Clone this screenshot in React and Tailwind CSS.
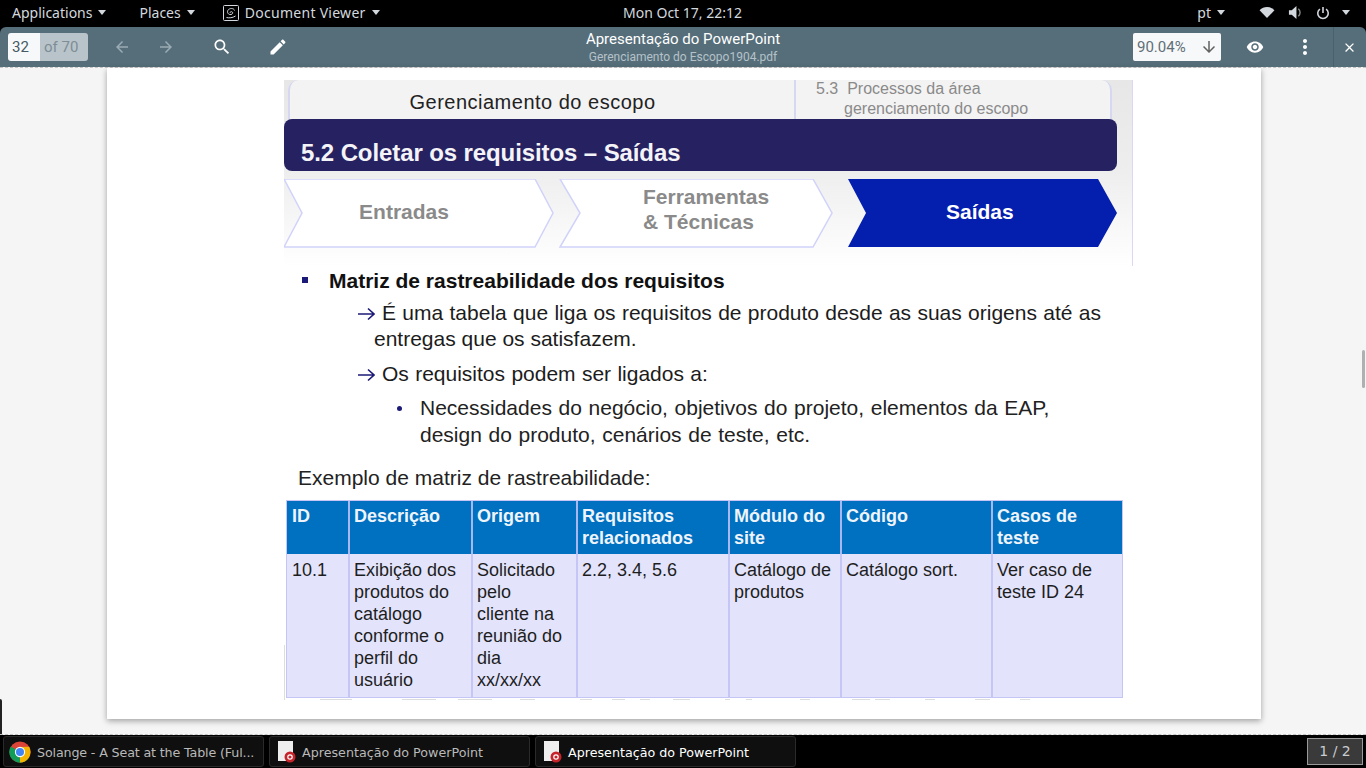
import React from "react";

const paths = {
  back: "M20 11H7.83l5.59-5.59L12 4l-8 8 8 8 1.41-1.41L7.83 13H20v-2z",
  forward: "M12 4l-1.41 1.41L16.17 11H4v2h12.17l-5.58 5.59L12 20l8-8z",
  down: "M20 12l-1.41-1.41L13 16.17V4h-2v12.17l-5.58-5.59L4 12l8 8 8-8z",
  search: "M15.5 14h-.79l-.28-.27C15.41 12.59 16 11.11 16 9.5 16 5.91 13.09 3 9.5 3S3 5.91 3 9.5 5.91 16 9.5 16c1.61 0 3.09-.59 4.23-1.57l.27.28v.79l5 4.99L20.49 19l-4.99-5zm-6 0C7.01 14 5 11.99 5 9.5S7.01 5 9.5 5 14 7.01 14 9.5 11.99 14 9.5 14z",
  edit: "M3 17.25V21h3.75L17.81 9.94l-3.75-3.75L3 17.25zM20.71 7.04c.39-.39.39-1.02 0-1.41l-2.34-2.34c-.39-.39-1.02-.39-1.41 0l-1.83 1.83 3.75 3.75 1.83-1.83z",
  eye: "M12 4.5C7 4.5 2.73 7.61 1 12c1.73 4.39 6 7.5 11 7.5s9.27-3.11 11-7.5c-1.73-4.39-6-7.5-11-7.5zM12 17c-2.76 0-5-2.24-5-5s2.24-5 5-5 5 2.24 5 5-2.24 5-5 5zm0-8c-1.66 0-3 1.34-3 3s1.34 3 3 3 3-1.34 3-3-1.34-3-3-3z",
  more: "M12 8c1.1 0 2-.9 2-2s-.9-2-2-2-2 .9-2 2 .9 2 2 2zm0 2c-1.1 0-2 .9-2 2s.9 2 2 2 2-.9 2-2-.9-2-2-2zm0 6c-1.1 0-2 .9-2 2s.9 2 2 2 2-.9 2-2-.9-2-2-2z",
  close: "M19 6.41L17.59 5 12 10.59 6.41 5 5 6.41 10.59 12 5 17.59 6.41 19 12 13.41 17.59 19 19 17.59 13.41 12z",
};

function MatIcon({ name, className }) {
  return (
    <svg viewBox="0 0 24 24" fill="currentColor" className={className}>
      <path d={paths[name]} />
    </svg>
  );
}

function Caret({ className = "" }) {
  return <span className={"inline-block w-0 h-0 border-x-[4.5px] border-x-transparent border-t-[5px] border-t-[#d3d8de] " + className} />;
}

function ChromeIcon() {
  return (
    <svg viewBox="0 0 24 24" className="w-[22px] h-[22px] shrink-0">
      <circle cx="12" cy="12" r="11.5" fill="#db4437" />
      <path d="M12 12 L22 17.8 A11.5 11.5 0 0 1 6 21.9 Z" fill="#0f9d58" />
      <path d="M12 12 L2 6 A11.5 11.5 0 0 0 6 21.9 L12 12Z" fill="#0f9d58" />
      <path d="M12 12 L12 23.5 A11.5 11.5 0 0 0 22 6.3 L12 6.5Z" fill="#f4b400" />
      <circle cx="12" cy="12" r="5.6" fill="#fff" />
      <circle cx="12" cy="12" r="4.4" fill="#4285f4" />
    </svg>
  );
}

function PdfIcon() {
  return (
    <svg viewBox="0 0 18 24" className="w-[18px] h-[24px] shrink-0">
      <rect x="0" y="1" width="15" height="20" fill="#eeeeee" />
      <circle cx="12" cy="17" r="5.5" fill="#c5242a" />
      <circle cx="12" cy="17" r="2.2" fill="none" stroke="#fff" strokeWidth="1.2" />
    </svg>
  );
}

function ViewerIcon() {
  return (
    <svg viewBox="0 0 16 16" className="w-[16px] h-[16px] ml-[28px]" fill="none" stroke="#d3d8de" strokeWidth="1">
      <rect x="0.5" y="0.5" width="15" height="15" rx="1" />
      <path d="M11.500 5.500C11 3 6.500 2.800 5 5.200c-1.300 2.200.3 4.800 3 4.300 1.600-.3 2.200-1.700 1.300-2.500-.8-.7-2.300-.3-2.300.9M3.500 12.500c2.500.6 6 .5 9-1.500" />
    </svg>
  );
}

function TaskButton({ icon, label, active, pad, labelClass = "" }) {
  return (
    <div className={"w-[261px] h-[31px] flex items-center gap-[6px] rounded-[3px] border border-[#2a2a2a] bg-[#0f0f0f] shrink-0 " + pad + " " + (active ? "text-white" : "text-[#b9b9b9]")}>
      {icon}
      <span className={"text-[12.7px] pt-[2px] whitespace-nowrap " + labelClass}>{label}</span>
    </div>
  );
}

function ArrowGlyph() {
  return (
    <svg viewBox="0 0 17 14" className="inline-block w-[17px] h-[14px] -ml-[24px] mr-[7px] align-[-1px] text-[#1c1a78]" fill="none" stroke="currentColor" strokeWidth="1.6">
      <path d="M0 7h15.5M10 1.5 16 7l-6 5.5" />
    </svg>
  );
}

const head = ["ID", "Descrição", "Origem", "Requisitos relacionados", "Módulo do site", "Código", "Casos de teste"];
const body = [
  "10.1",
  "Exibição dos produtos do catálogo conforme o perfil do usuário",
  "Solicitado\npelo\ncliente na\nreunião do\ndia\nxx/xx/xx",
  "2.2, 3.4, 5.6",
  "Catálogo de produtos",
  "Catálogo sort.",
  "Ver caso de teste ID 24",
];
const residue = [[34, 32], [116, 34], [172, 34], [234, 15], [294, 12], [326, 13], [354, 10], [387, 17], [439, 5], [460, 6], [514, 10], [566, 18], [589, 15], [639, 10], [689, 15], [734, 10]];

function Slide() {
  return (
    <div className="relative w-[849px] h-[620px] overflow-hidden mt-[12px] ml-[177px] bg-white font-['Liberation_Sans',Arial,sans-serif] text-[#1c1c1c]">
      <div className="bg-gradient-to-b from-[#e7e7e7] via-[#eeeeee] to-white h-[186px] border-r border-[#d9d9f5]">
        <div className="h-[39px] flex pl-[4px] pr-[20px]">
          <div className="w-[506px] bg-[#f3f3f3] border-l-2 border-[#d5d8f0] rounded-tl-[10px] flex items-center justify-center pr-[19px] pt-[4px] text-[20px] text-[#222] tracking-[0.5px]">
            Gerenciamento do escopo
          </div>
          <div className="flex-1 bg-[#f3f3f3] border-l-2 border-r-2 border-[#d5d8f0] rounded-tr-[10px] pl-[20px] text-[16px] leading-[20px] text-[#8a8a8a]">
            <div className="-mt-[1px]">5.3&nbsp; Processos da área</div>
            <div className="pl-[28px]">gerenciamento do escopo</div>
          </div>
        </div>
        <div className="w-[833px] h-[52px] bg-[#262262] rounded-[8px] pl-[17px] pt-[18px] text-[24px] leading-[32px] font-bold text-[#f4f4f8] tracking-[-0.1px]">
          5.2 Coletar os requisitos – Saídas
        </div>
        <div className="relative w-[834px] h-[69px] mt-[8px] font-bold text-[21px]">
          <svg viewBox="0 0 834 69" className="absolute inset-0 w-[834px] h-[69px]">
            <polygon points="0,0 251,0 269,34 251,68 0,68 18,34" fill="#fff" stroke="#d0d2fa" strokeWidth="1.5" />
            <polygon points="276,0 529,0 548,34 529,68 276,68 296,34" fill="#fff" stroke="#d0d2fa" strokeWidth="1.5" />
            <polygon points="564,0 814,0 833,34 814,68 564,68 582,34" fill="#041eae" />
          </svg>
          <div className="relative flex h-full items-center">
            <div className="w-[276px] text-center pr-[36px] text-[#8a8a8a] -mt-[4px]">Entradas</div>
            <div className="w-[288px] pl-[83px] text-[#8a8a8a] leading-[25px] -mt-[9px]">Ferramentas<br />&amp; Técnicas</div>
            <div className="pl-[98px] text-white -mt-[4px]">Saídas</div>
          </div>
        </div>
      </div>

      <div className="flex items-center pl-[18px] h-[30px]">
        <span className="w-[6px] h-[6px] bg-[#1c1a78] mr-[21px] -mt-[3px]" />
        <span className="font-bold text-[21px] text-[#111]">Matriz de rastreabilidade dos requisitos</span>
      </div>
      <p className="pl-[90px] w-[817px] mt-[4px] text-[21px] leading-[26px] text-justify indent-[8px]">
        <ArrowGlyph />É uma tabela que liga os requisitos de produto desde as suas origens até as entregas que os satisfazem.
      </p>
      <p className="pl-[90px] mt-[9px] text-[21px] leading-[26px] indent-[8px] [word-spacing:0.5px]">
        <ArrowGlyph />Os requisitos podem ser ligados a:
      </p>
      <div className="relative pl-[136px] w-[790px] mt-[7px] text-[21px] leading-[27px] text-[#222] [word-spacing:0.8px]">
        <span className="absolute left-[113px] top-[12px] w-[5px] h-[5px] rounded-full bg-[#1c1a78]" />
        Necessidades do negócio, objetivos do projeto, elementos da EAP, design do produto, cenários de teste, etc.
      </div>
      <div className="pl-[14px] mt-[17px] text-[21px] leading-[26px] text-[#222]">Exemplo de matriz de rastreabilidade:</div>

      <div className="ml-[2px] mt-[9px] w-[837px] grid grid-cols-[61px_123px_105px_152px_112px_151px_131px] text-[18px] leading-[22px] border border-[#c5c6f5]">
        {head.map((h, i) => (
          <div key={h} className={"h-[53px] bg-[#0070c0] text-[#eef4fa] font-bold pr-[2px] pt-[4px] " + (i > 0 ? "pl-[4px] border-l-2 border-[#a8b8ee]" : "pl-[5px]")}>
            {h}
          </div>
        ))}
        {body.map((b, i) => (
          <div key={b} className={"h-[143px] bg-[#e3e4fc] pr-[2px] pt-[5px] text-[#1e1e1e] whitespace-pre-line " + (i > 0 ? "pl-[4px] border-l-2 border-[#c5c6f5]" : "pl-[5px]")}>
            {b}
          </div>
        ))}
      </div>
      <div className="relative h-[3px] ml-[2px]">
        {residue.map(([l, w]) => (
          <span key={l} className="absolute top-[1px] h-px bg-[#dddddd]" style={{ left: l, width: w }} />
        ))}
      </div>
      <span className="absolute left-0 top-[565px] w-px h-[55px] bg-[#dddddd]" />
    </div>
  );
}

export default function App() {
  return (
    <div className="relative w-[1366px] h-[768px] overflow-hidden flex flex-col bg-black font-['Noto_Sans',sans-serif]">
      <header className="h-[27px] shrink-0 flex items-center pb-[2px] text-[14px] text-[#d3d8de]">
        <div className="flex items-center pl-[12px]">
          <span>Applications</span>
          <Caret className="ml-[6px]" />
          <span className="ml-[33px]">Places</span>
          <Caret className="ml-[6px]" />
          <ViewerIcon />
          <span className="ml-[6px] tracking-[0.28px]">Document Viewer</span>
          <Caret className="ml-[6px]" />
        </div>
        <div className="absolute left-[623px] top-[2px]">Mon Oct 17, 22:12</div>
        <div className="ml-auto flex items-center pr-[16px]">
          <span>pt</span>
          <Caret className="ml-[6px]" />
          <svg viewBox="0 0 16 14" className="w-[16px] h-[13px] ml-[34px]" fill="#d3d8de"><path d="M0 4.500C4.500 0 11.500 0 16 4.500L8 13Z" /></svg>
          <svg viewBox="0 0 16 16" className="w-[15px] h-[15px] ml-[13px]" fill="#d3d8de"><path d="M1 5.500h3L9 1v14l-5-4.500H1Z" /><path d="M11 4c2.500 2 2.500 6 0 8" fill="none" stroke="#888" strokeWidth="1.500" /></svg>
          <svg viewBox="0 0 16 16" className="w-[14px] h-[14px] ml-[13px]" fill="none" stroke="#d3d8de" strokeWidth="1.800"><path d="M4.500 3.500a6 6 0 1 0 7 0M8 1v7" /></svg>
          <Caret className="ml-[12px]" />
        </div>
      </header>

      <div className="h-[40px] shrink-0 bg-[#566e7a] rounded-t-[6px] grid grid-cols-[1fr_auto_1fr] items-center text-white">
        <div className="flex items-center pl-[8px]">
          <div className="flex h-[28px] w-[80px] rounded-[3px] overflow-hidden text-[15px] leading-[28px] font-['Roboto',sans-serif]">
            <span className="w-[32px] bg-[#f7f8f9] pl-[4px] text-[#455a64]">32</span>
            <span className="flex-1 bg-[#b9c4ca] pl-[4px] text-[#7d8d96]">of 70</span>
          </div>
          <MatIcon name="back" className="w-[18px] h-[18px] ml-[25px] text-[#9aabb4]" />
          <MatIcon name="forward" className="w-[18px] h-[18px] ml-[26px] text-[#9aabb4]" />
          <MatIcon name="search" className="w-[20px] h-[20px] ml-[37px]" />
          <MatIcon name="edit" className="w-[20px] h-[20px] ml-[36px]" />
        </div>
        <div className="text-center font-['Roboto',sans-serif]">
          <div className="text-[15px] leading-[18px]">Apresentação do PowerPoint</div>
          <div className="text-[12px] leading-[15px] mt-[2px] text-[#b5c2c9]">Gerenciamento do Escopo1904.pdf</div>
        </div>
        <div className="flex items-center justify-end h-full">
          <div className="flex items-center justify-between w-[88px] h-[28px] bg-[#f7f8f9] rounded-[2px] pl-[4px] pr-[3px] text-[15px] text-[#5f6f78] font-['Roboto',sans-serif]">
            90.04%
            <MatIcon name="down" className="w-[18px] h-[18px] text-[#616161]" />
          </div>
          <MatIcon name="eye" className="w-[18px] h-[18px] ml-[25px]" />
          <MatIcon name="more" className="w-[24px] h-[24px] ml-[29px]" />
          <div className="w-px h-full bg-[#4a606b] ml-[16px]" />
          <MatIcon name="close" className="w-[15px] h-[15px] ml-[8px] mr-[9px]" />
        </div>
      </div>

      <main className="relative flex-1 min-h-0 bg-[#f5f5f5] border-y border-dashed border-[#c4c4c4]">
        <div className="ml-[107px] w-[1154px] h-[651px] bg-white shadow-[0_2px_6px_rgba(0,0,0,0.35)] overflow-hidden">
          <Slide />
        </div>
        <span className="absolute right-[1px] top-[282px] w-[3px] h-[38px] rounded-full bg-[#b0b0b0]" />
        <span className="absolute left-0 top-[631px] w-[2px] h-[35px] rounded-tr-[3px] bg-[#222222]" />
      </main>

      <footer className="h-[33px] shrink-0 flex items-center pl-[3px] gap-[5px] font-['DejaVu_Sans',sans-serif]">
        <TaskButton icon={<ChromeIcon />} pad="pl-[5px]" labelClass="tracking-[-0.15px]" label="Solange - A Seat at the Table (Ful..." />
        <TaskButton icon={<PdfIcon />} pad="pl-[8px]" label="Apresentação do PowerPoint" />
        <TaskButton active icon={<PdfIcon />} pad="pl-[8px]" label="Apresentação do PowerPoint" />
        <div className="ml-auto mr-[3px] w-[56px] h-[27px] border border-[#9a9a9a] bg-[#3a3a3a] text-[#c9ccd0] text-[14px] flex items-center justify-center">1 / 2</div>
      </footer>
    </div>
  );
}
